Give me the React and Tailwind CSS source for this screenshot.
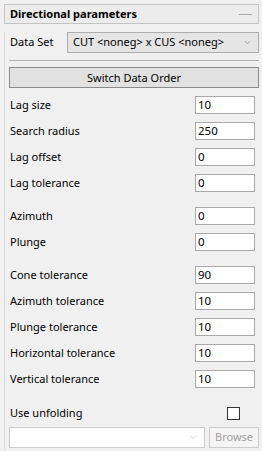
import { ChevronDown } from 'lucide-react';

const groups = [
  [
    ['Lag size', '10'],
    ['Search radius', '250'],
    ['Lag offset', '0'],
    ['Lag tolerance', '0'],
  ],
  [
    ['Azimuth', '0'],
    ['Plunge', '0'],
  ],
  [
    ['Cone tolerance', '90'],
    ['Azimuth tolerance', '10'],
    ['Plunge tolerance', '10'],
    ['Horizontal tolerance', '10'],
    ['Vertical tolerance', '10'],
  ],
];

function Field({ label, value }) {
  return (
    <div className="flex items-center justify-between h-[26px]">
      <span className="ml-[1px]">{label}</span>
      <div className="w-[60px] h-[18px] mr-[4px] bg-white border border-[#a9a9a9] flex items-center pl-[2px] leading-none text-[11.5px]">
        {value}
      </div>
    </div>
  );
}

export default function App() {
  return (
    <div className="w-[262px] h-[451px] bg-[#f0f0f0] text-[11px] text-black overflow-hidden pt-[4px]" style={{ fontFamily: '"Noto Sans", "Open Sans", sans-serif' }}>
      {/* Header */}
      <div className="ml-[4px] w-[255px] h-[20px] border border-[#c4c4c4] bg-[#ececec] flex items-center justify-between px-[5px]">
        <span className="font-bold">Directional parameters</span>
        <span className="w-[13px] h-[1px] bg-[#a8a8a8] mr-[1px]" />
      </div>

      <div className="ml-[4px] w-[255px] h-[424px] border-l border-[#d9d9d9] pl-[4px]">
        {/* Data set */}
        <div className="flex items-center h-[21px] mt-[8px]">
          <span className="ml-[1px] w-[57px]">Data Set</span>
          <div className="flex-1 h-full bg-[#e5e5e5] border border-[#adadad] flex items-center justify-between pl-[5px] pr-[6px]">
            <span>CUT &lt;noneg&gt; x CUS &lt;noneg&gt;</span>
            <ChevronDown size={9} strokeWidth={1.5} className="text-[#777]" />
          </div>
        </div>

        <div className="h-[1px] bg-[#b4b4b4] mt-[7px]" />

        <button className="w-full h-[21px] mt-[6px] bg-[#e1e1e1] border border-[#8a8a8a] flex items-center justify-center leading-none">
          Switch Data Order
        </button>

        {/* Parameters */}
        <div className="mt-[4px] flex flex-col gap-[7px]">
          {groups.map((g, i) => (
            <div key={i}>
              {g.map(([l, v]) => (
                <Field key={l} label={l} value={v} />
              ))}
            </div>
          ))}
        </div>

        <div className="flex items-center justify-between h-[26px] mt-[8px]">
          <span className="ml-[1px]">Use unfolding</span>
          <div className="w-[13px] h-[13px] border border-[#333] bg-white mr-[19px]" />
        </div>

        <div className="flex items-center gap-[4px] h-[21px] mt-[1px]">
          <div className="w-[196px] h-full bg-white border border-[#cccccc] flex items-center justify-end pr-[6px]">
            <ChevronDown size={9} strokeWidth={1.5} className="text-[#b0b0b0]" />
          </div>
          <div className="flex-1 h-full border border-[#cccccc] bg-[#f4f4f4] text-[#a0a0a0] flex items-center justify-center">
            Browse
          </div>
        </div>
      </div>
    </div>
  );
}
